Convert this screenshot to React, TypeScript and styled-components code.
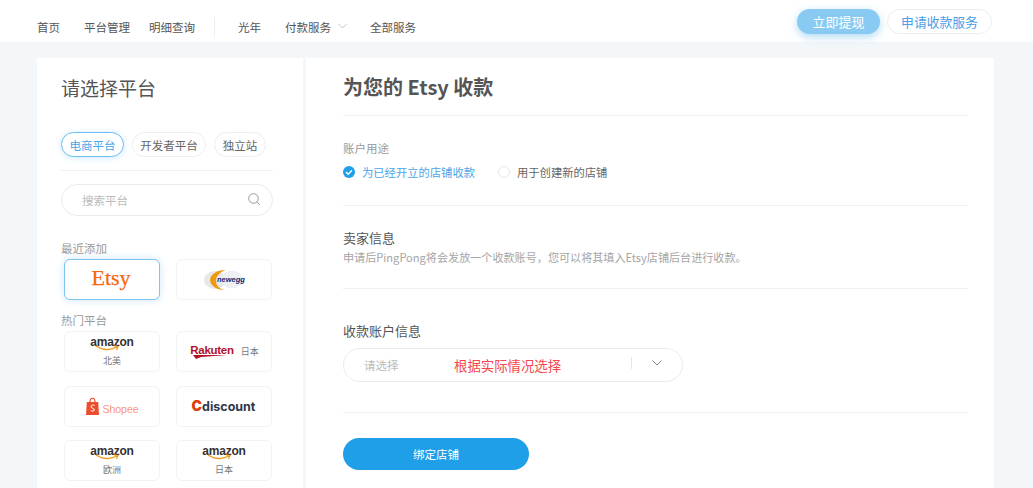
import React from "react";
import styled, { createGlobalStyle } from "styled-components";

const Global = createGlobalStyle`
  html, body { margin: 0; padding: 0; height: 488px; overflow: hidden; background: #f3f7fa; }
  body { position: relative; font-family: "Noto Sans CJK SC", "Liberation Sans", sans-serif; color: #555; }
  * { box-sizing: border-box; }
`;

const Watermark = styled.div`
  position: absolute; left: 25px; top: 28px; display: grid; grid-template-columns: repeat(6, 157px);
  row-gap: 100px; pointer-events: none; z-index: 2;
`;
const WatermarkText = styled.span`
  display: block; width: 157px; height: 20px; font: 15px/20px "Liberation Sans", sans-serif; white-space: nowrap;
  color: rgba(0, 0, 0, .022); transform-origin: 0 50%; transform: rotate(31.6deg);
`;

const Header = styled.header`
  height: 42px; background: #fff; display: flex; align-items: flex-start;
  padding: 8px 41px 0 37px;
`;
const NavItem = styled.span<{ $w: number }>`
  width: ${(p) => p.$w}px; flex: none; font-size: 11.5px; line-height: 38px; height: 38px; color: #555;
  display: flex; align-items: center; white-space: nowrap;
`;
const NavSep = styled.i`
  width: 1px; height: 20px; background: #eceff1; margin: 9px 23px 0 6px; flex: none;
`;
const NavChevron = styled.svg`
  width: 9px; height: 6px; margin: -3px 0 0 7px;
`;
const HeaderActions = styled.div`
  margin-left: auto; display: flex; gap: 7px; margin-top: 1px;
`;
const Primary = styled.button`
  width: 83px; height: 25px; border: 0; border-radius: 13px; background: #88caf2; color: #fff;
  font: 13px/25px "Noto Sans CJK SC", sans-serif; padding: 0; box-shadow: 0 3px 8px rgba(100, 185, 240, .5);
`;
const Outline = styled.button`
  width: 105px; height: 25px; border: 1px solid #eceef0; border-radius: 13px; background: #fff; color: #4a9fe8;
  font: 12.8px/23px "Noto Sans CJK SC", sans-serif; padding: 0;
`;

const Main = styled.main`
  margin: 16px 39px 0 37px; display: flex; gap: 3px; height: 430px;
`;
const Side = styled.aside`
  width: 266px; flex: none; background: #fff; padding: 16px 30px 0 24px;
`;
const Content = styled.section`
  flex: 1; background: #fff; padding: 14px 26px 0 37px;
`;
const SideTitle = styled.h2`
  margin: 0; font-size: 19px; line-height: 28px; font-weight: 400; color: #555;
`;
const Tabs = styled.div`
  display: flex; gap: 8px; margin-top: 30px; padding-bottom: 13px; border-bottom: 1px solid #eeeff1;
`;
const Tab = styled.span<{ $active?: boolean; $w: number }>`
  width: ${(p) => p.$w}px; height: 25px; border-radius: 13px; font-size: 11.5px; line-height: 24px; text-align: center;
  border: 1px solid ${(p) => (p.$active ? "#6bbdf0" : "#eceef0")};
  color: ${(p) => (p.$active ? "#4aa5ea" : "#666")};
  box-shadow: ${(p) => (p.$active ? "0 1px 6px rgba(120,195,245,.35)" : "none")};
`;
const Search = styled.div`
  height: 32px; margin-top: 13px; border: 1px solid #e9ebed; border-radius: 16px;
  display: flex; align-items: center; justify-content: space-between; padding: 0 11px 1px 20px;
  font-size: 11.5px; color: #bbb;
`;
const SectionLabel = styled.div<{ $top: number }>`
  font-size: 11.5px; line-height: 16px; color: #999; margin-top: ${(p) => p.$top}px;
`;
const Grid = styled.div<{ $gap: number }>`
  display: grid; grid-template-columns: 96px 96px; column-gap: 16px; row-gap: ${(p) => p.$gap}px;
  padding-left: 3px; margin-top: 3px;
`;
const Card = styled.div<{ $active?: boolean }>`
  height: 41px; border-radius: 6px; background: #fff; display: flex; flex-direction: column;
  align-items: center; justify-content: center;
  border: 1px solid ${(p) => (p.$active ? "#7cc4f2" : "#f2f3f5")};
  box-shadow: ${(p) => (p.$active ? "0 0 8px rgba(130,200,245,.4)" : "none")};
`;
const CardRow = styled.div`
  display: flex; align-items: center; gap: 7px; padding-left: 1px;
`;
const EtsyMark = styled.span`
  font: 22px/24px "Liberation Serif", serif; color: #f5660f; margin: -3px 0 0 -2px; -webkit-text-stroke: .25px #f5660f;
`;
const AmazonMark = styled.div`
  position: relative; height: 19px; font: 700 12px/13px "Liberation Sans", sans-serif; color: #333; letter-spacing: -.2px;
`;
const Smile = styled.svg`
  position: absolute; left: 5px; top: 9px; width: 25px; height: 7px;
`;
const Region = styled.span`
  font-size: 9px; line-height: 12px; color: #777;
`;
const RakutenMark = styled.span`
  position: relative; display: block; height: 17px; font: 700 11.5px/14px "Liberation Sans", sans-serif; color: #b0102a; letter-spacing: -.3px;
`;
const RakutenSwoosh = styled.svg`
  position: absolute; left: 1px; top: 12px; width: 38px; height: 4px;
`;
const ShopeeMark = styled.span`
  display: flex; align-items: flex-start; gap: 3px; height: 18px; font: 10.5px/16px "Liberation Sans", sans-serif; color: #f7967c;
  padding-left: 1px; margin-top: -1px;
`;
const ShopeeWord = styled.span`
  margin-top: 4px;
`;
const CdiscountMark = styled.span`
  font: 700 12.5px/16px Inter, "Liberation Sans", sans-serif; color: #2d3748; margin-left: -1px;
  b { color: #d9400f; font-size: 14px; }
`;
const NeweggMark = styled.span`
  position: relative; width: 40px; height: 21px; display: block;
`;
const NeweggText = styled.span`
  position: absolute; left: 13px; top: 6px; font: italic 700 7.5px/9px "Liberation Sans", sans-serif; color: #16296f;
`;

const Title = styled.h1`
  margin: 0; height: 44px; font-size: 20px; line-height: 30px; font-weight: 700; color: #555; border-bottom: 1px solid #eeeff1;
`;
const Section = styled.div<{ $h: number }>`
  height: ${(p) => p.$h}px; border-bottom: 1px solid #eeeff1;
`;
const MutedLabel = styled.div`
  font-size: 11.5px; line-height: 16px; color: #999; padding-top: 24px;
`;
const RadioRow = styled.div`
  display: flex; align-items: center; margin-top: 8px; font-size: 11.3px; line-height: 16px;
`;
const Radio = styled.span<{ $on?: boolean }>`
  display: flex; align-items: center; gap: 7px; width: ${(p) => (p.$on ? "155px" : "auto")};
  color: ${(p) => (p.$on ? "#4aa5ea" : "#666")};
`;
const Circle = styled.i`
  width: 12px; height: 12px; border: 1px solid #e4e6e8; border-radius: 50%; display: block;
`;
const Check = styled.svg`
  width: 12px; height: 12px;
`;
const InfoTitle = styled.div<{ $top: number }>`
  font-size: 13px; line-height: 18px; color: #555; padding-top: ${(p) => p.$top}px;
`;
const InfoDesc = styled.div`
  font-size: 11.1px; line-height: 16px; color: #a5a5a5; margin-top: 2px;
`;
const SelectBox = styled.div`
  position: relative; width: 340px; height: 34px; margin-top: 8px; border: 1px solid #e9ebed; border-radius: 17px;
  display: flex; align-items: center; padding-left: 20px; font-size: 11.5px; color: #bbb;
`;
const Note = styled.span`
  position: absolute; left: 110px; top: 6px; font: 13.4px/20px "Noto Sans CJK SC", sans-serif; color: #f4474d;
`;
const SelectEnd = styled.div`
  margin-left: auto; display: flex; align-items: center; margin-right: 20px; margin-top: -4px;
`;
const SelectSep = styled.i`
  width: 1px; height: 12px; background: #e4e6e8; margin-right: 20px;
`;
const Submit = styled.button`
  display: block; width: 186px; height: 32px; margin-top: 25px; border: 0; border-radius: 16px; background: #1e9fe8;
  color: #fff; font: 11.5px/32px "Noto Sans CJK SC", sans-serif; padding: 0;
`;

const Amazon = ({ region }: { region: string }) => (
  <>
    <AmazonMark>
      amazon
      <Smile viewBox="0 0 25 7" fill="none" aria-hidden>
        <path d="M1 1c6 4 14 4.500 21 1M19 .8l4 .7-1.500 3.500" stroke="#f09a1a" strokeWidth="1.200" />
      </Smile>
    </AmazonMark>
    <Region>{region}</Region>
  </>
);

const watermarkCells = Array.from({ length: 24 }, (_, i) => i);

export default function App() {
  return (
    <>
      <Global />
      <Header>
        <NavItem $w={47}>首页</NavItem>
        <NavItem $w={65}>平台管理</NavItem>
        <NavItem $w={59}>明细查询</NavItem>
        <NavSep />
        <NavItem $w={47}>光年</NavItem>
        <NavItem $w={85}>
          付款服务
          <NavChevron viewBox="0 0 9 6" fill="none" aria-hidden>
            <path d="M.500 1l4 4 4-4" stroke="#c4c4c4" />
          </NavChevron>
        </NavItem>
        <NavItem $w={60}>全部服务</NavItem>
        <HeaderActions>
          <Primary>立即提现</Primary>
          <Outline>申请收款服务</Outline>
        </HeaderActions>
      </Header>
      <Main>
        <Side>
          <SideTitle>请选择平台</SideTitle>
          <Tabs>
            <Tab $active $w={63}>电商平台</Tab>
            <Tab $w={74}>开发者平台</Tab>
            <Tab $w={52}>独立站</Tab>
          </Tabs>
          <Search>
            搜索平台
            <svg width="13" height="13" viewBox="0 0 13 13" fill="none" aria-hidden>
              <circle cx="5.500" cy="5.500" r="4.800" stroke="#999" />
              <path d="M9 9l3 3" stroke="#999" />
            </svg>
          </Search>
          <SectionLabel $top={24}>最近添加</SectionLabel>
          <Grid $gap={0}>
            <Card $active><EtsyMark>Etsy</EtsyMark></Card>
            <Card>
              <NeweggMark>
                <svg width="40" height="21" viewBox="0 0 40 21" aria-hidden>
                  <ellipse cx="11" cy="11" rx="11" ry="9" fill="#e6e8ec" />
                  <ellipse cx="28" cy="10.500" rx="11" ry="9" fill="#eef0f3" />
                  <path d="M22 1C12 1 6 6 6 11c0 5 6 10 15 10-5-1-9-4-9-9 0-5 4-9 10-11z" fill="#ef9b12" />
                </svg>
                <NeweggText>newegg</NeweggText>
              </NeweggMark>
            </Card>
          </Grid>
          <SectionLabel $top={12}>热门平台</SectionLabel>
          <Grid $gap={13.5}>
            <Card><Amazon region="北美" /></Card>
            <Card>
              <CardRow>
                <RakutenMark>
                  Rakuten
                  <RakutenSwoosh viewBox="0 0 38 4" aria-hidden>
                    <path d="M2 0h34L10 2 5 4z" fill="#b0102a" />
                  </RakutenSwoosh>
                </RakutenMark>
                <Region>日本</Region>
              </CardRow>
            </Card>
            <Card>
              <ShopeeMark>
                <svg width="13" height="18" viewBox="0 0 13 18" aria-hidden>
                  <path d="M.800 5h11.400l.800 13H0z" fill="#ee4d2d" />
                  <path d="M4 5c0-5 5-5 5 0" fill="none" stroke="#ee4d2d" strokeWidth="1.200" />
                  <path d="M8.600 8.500C7.500 7.500 4.800 8 5 10c.3 1.500 3.500 1 3.300 3-.2 1.500-2.500 1.500-3.700.5" fill="none" stroke="#fff" />
                </svg>
                <ShopeeWord>Shopee</ShopeeWord>
              </ShopeeMark>
            </Card>
            <Card><CdiscountMark><b>C</b>discount</CdiscountMark></Card>
            <Card><Amazon region="欧洲" /></Card>
            <Card><Amazon region="日本" /></Card>
          </Grid>
        </Side>
        <Content>
          <Title>为您的 Etsy 收款</Title>
          <Section $h={90}>
            <MutedLabel>账户用途</MutedLabel>
            <RadioRow>
              <Radio $on>
                <Check viewBox="0 0 12 12" aria-hidden>
                  <circle cx="6" cy="6" r="6" fill="#1e9fe8" />
                  <path d="M3 6l2.200 2.200L9 4.300" fill="none" stroke="#fff" strokeWidth="1.500" />
                </Check>
                为已经开立的店铺收款
              </Radio>
              <Radio>
                <Circle />
                用于创建新的店铺
              </Radio>
            </RadioRow>
          </Section>
          <Section $h={83}>
            <InfoTitle $top={23}>卖家信息</InfoTitle>
            <InfoDesc>申请后PingPong将会发放一个收款账号，您可以将其填入Etsy店铺后台进行收款。</InfoDesc>
          </Section>
          <Section $h={124}>
            <InfoTitle $top={33}>收款账户信息</InfoTitle>
            <SelectBox>
              请选择
              <Note>根据实际情况选择</Note>
              <SelectEnd>
                <SelectSep />
                <svg width="10" height="6" viewBox="0 0 10 6" fill="none" aria-hidden>
                  <path d="M.500.500l4.500 4.500L9.500.500" stroke="#888" />
                </svg>
              </SelectEnd>
            </SelectBox>
          </Section>
          <Submit>绑定店铺</Submit>
        </Content>
      </Main>
      <Watermark aria-hidden>
        {watermarkCells.map((i) => (
          <WatermarkText key={i}>21010410010256904</WatermarkText>
        ))}
      </Watermark>
    </>
  );
}
